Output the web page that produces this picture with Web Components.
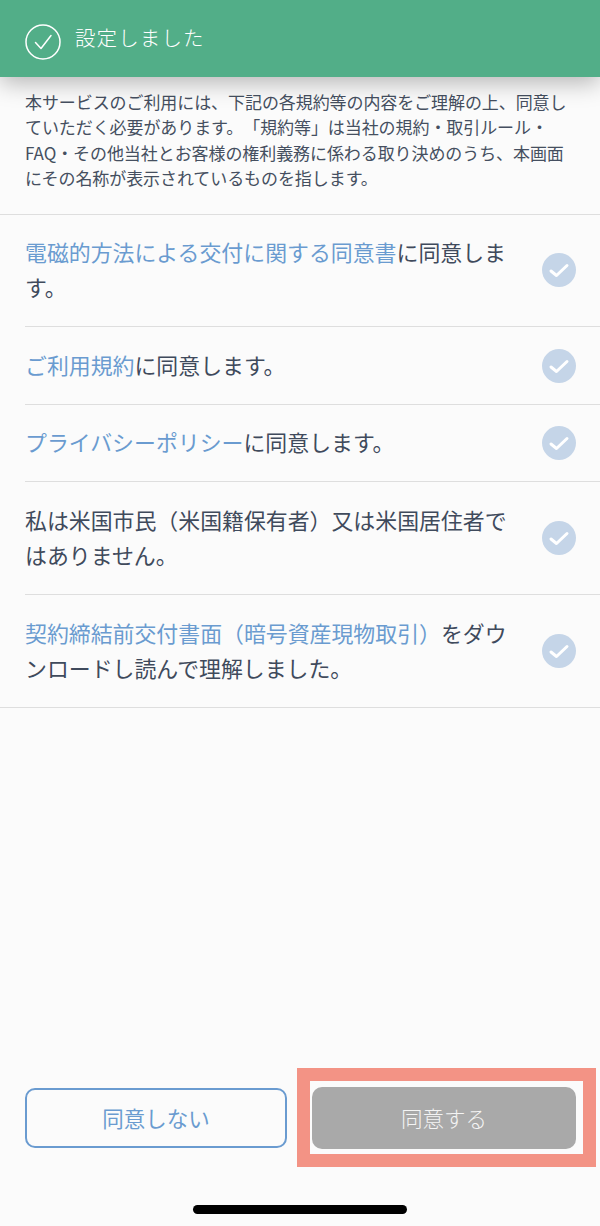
<!DOCTYPE html>
<html lang="ja">
<head>
<meta charset="utf-8">
<title>同意</title>
<style>
html, body { margin: 0; padding: 0; background: #fbfbfb; }
</style>
</head>
<body>
<consent-page>
	<toast-bar slot="toast">設定しました</toast-bar>
	<intro-text slot="intro">本サービスのご利用には、下記の各規約等の内容をご理解の上、同意し<br>ていただく必要があります。「規約等」は当社の規約・取引ルール・<br>FAQ・その他当社とお客様の権利義務に係わる取り決めのうち、本画面<br>にその名称が表示されているものを指します。</intro-text>
	<agree-row slot="rows"><a>電磁的方法による交付に関する同意書</a>に同意しま<br>す。</agree-row>
	<agree-row slot="rows"><a>ご利用規約</a>に同意します。</agree-row>
	<agree-row slot="rows"><a>プライバシーポリシー</a>に同意します。</agree-row>
	<agree-row slot="rows">私は米国市民（米国籍保有者）又は米国居住者で<br>はありません。</agree-row>
	<agree-row slot="rows" last><a>契約締結前交付書面（暗号資産現物取引）</a>をダウ<br>ンロードし読んで理解しました。</agree-row>
	<action-button slot="left" kind="outline">同意しない</action-button>
	<action-button slot="right" kind="disabled" marked>同意する</action-button>
</consent-page>

<script>
const FONT = `"Noto Sans CJK JP", "Noto Sans", sans-serif`;

class ConsentPage extends HTMLElement {
	constructor() {
		super();
		this.attachShadow({ mode: 'open' });
		this.shadowRoot.innerHTML = `
		<style>
			:host { display: flex; flex-direction: column; width: 600px; height: 1226px; background: #fbfbfb; overflow: hidden; font-family: ${FONT}; color: #3f4a5c; text-spacing-trim: space-all; }
			.rows { display: flex; flex-direction: column; border-top: 1px solid #dedede; margin-top: 23px; }
			.spacer { flex: 1; }
			.buttons { display: flex; justify-content: space-between; align-items: center; padding: 0 24px 0 25px; height: 62px; }
			.home { display: flex; justify-content: center; padding: 56px 0 12px; }
			.home i { display: block; width: 214px; height: 9px; border-radius: 4.5px; background: #000; }
		</style>
		<slot name="toast"></slot>
		<slot name="intro"></slot>
		<div class="rows"><slot name="rows"></slot></div>
		<div class="spacer"></div>
		<div class="buttons"><slot name="left"></slot><slot name="right"></slot></div>
		<div class="home"><i></i></div>`;
	}
}

class ToastBar extends HTMLElement {
	constructor() {
		super();
		this.attachShadow({ mode: 'open' });
		this.shadowRoot.innerHTML = `
		<style>
			:host { display: flex; align-items: center; gap: 14px; height: 77px; padding-left: 25px; box-sizing: border-box; background: #52ae88; color: #fff; box-shadow: 0 6px 22px rgba(0,0,0,.28); position: relative; z-index: 2; font-size: 20.5px; font-weight: 300; letter-spacing: 1.1px; }
			svg { width: 36px; height: 36px; margin-top: 7px; flex: none; }
			span { margin-top: -4px; }
		</style>
		<svg viewBox="0 0 36 36" fill="none" stroke="#fff" stroke-width="1.5"><circle cx="18" cy="18" r="17"/><path d="M10.5 18.5l5.5 6 10-13" stroke-linecap="round" stroke-linejoin="round"/></svg>
		<span><slot></slot></span>`;
	}
}

class IntroText extends HTMLElement {
	constructor() {
		super();
		this.attachShadow({ mode: 'open' });
		this.shadowRoot.innerHTML = `
		<style>
			:host { display: block; padding: 12px 0 0 25px; font-size: 17px; letter-spacing: -0.08px; line-height: 25.4px; white-space: nowrap; color: #454f60; }
		</style>
		<slot></slot>`;
	}
}

class AgreeRow extends HTMLElement {
	constructor() {
		super();
		this.attachShadow({ mode: 'open' });
		this.shadowRoot.innerHTML = `
		<style>
			:host { display: block; padding-left: 25px; font-size: 21.9px; line-height: 35px; white-space: nowrap; color: #3f4a5c; }
			:host([last]) { padding-left: 0; }
			.row { display: flex; align-items: center; justify-content: space-between; padding-right: 24px; border-bottom: 1px solid #dedede; }
			:host([last]) .row { padding-left: 25px; }
			.label { padding: 19.5px 0 22.1px; }
			::slotted(a) { color: #6a9bd0; }
			svg { width: 34px; height: 34px; flex: none; }
		</style>
		<div class="row">
			<div class="label"><slot></slot></div>
			<svg viewBox="0 0 34 34"><circle cx="17" cy="17" r="17" fill="#c5d5e8"/><path d="M9 18l5.5 4.5 10.5-10" fill="none" stroke="#fff" stroke-width="3" stroke-linecap="round" stroke-linejoin="round"/></svg>
		</div>`;
	}
}

class ActionButton extends HTMLElement {
	constructor() {
		super();
		this.attachShadow({ mode: 'open' });
		this.shadowRoot.innerHTML = `
		<style>
			:host { display: block; position: relative; font-size: 21.5px; }
			.btn { display: flex; align-items: center; justify-content: center; box-sizing: border-box; border-radius: 10px; padding-bottom: 2px; }
			:host([kind="outline"]) .btn { width: 262px; height: 60px; border: 2px solid #6a9bd0; color: #6a9bd0; }
			:host([kind="disabled"]) .btn { width: 264px; height: 62px; background: #a9a9a9; color: #f4f4f4; font-weight: 300; }
			/* the red frame is laid over the button */
			.mark { display: none; position: absolute; left: -15px; top: -19px; width: 299px; height: 99px; box-sizing: border-box; border: 13px solid #f39385; pointer-events: none; }
			:host([marked]) .mark { display: block; }
		</style>
		<div class="btn"><slot></slot></div>
		<div class="mark"></div>`;
	}
}

customElements.define('consent-page', ConsentPage);
customElements.define('toast-bar', ToastBar);
customElements.define('intro-text', IntroText);
customElements.define('agree-row', AgreeRow);
customElements.define('action-button', ActionButton);
</script>
</body>
</html>
